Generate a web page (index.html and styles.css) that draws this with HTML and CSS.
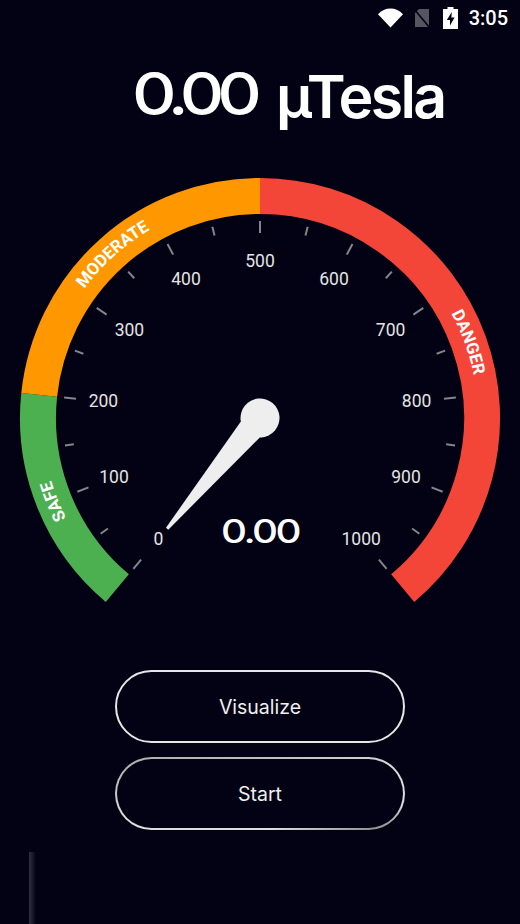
FILE: index.html
```html
<!DOCTYPE html>
<html lang="en">
<head>
    <meta charset="UTF-8">
    <meta name="viewport" content="width=device-width, initial-scale=1.0">
    <title>µTesla meter</title>
    <link rel="stylesheet" href="styles.css">
</head>
<body>
    <div class="page">
        <div class="status-bar">
            <svg class="wifi-icon" width="25" height="20" viewBox="0 0 25 20">
                <path d="M0 6.2C3.4 2.6 7.7 0.6 12.5 0.6S21.6 2.6 25 6.2L12.5 19.6Z" fill="#fff"/>
            </svg>
            <svg class="sim-icon" width="16" height="20" viewBox="0 0 16 20">
                <path d="M5 1H15V19H1V5Z" fill="#55555f"/>
                <path d="M0 1L16 20" stroke="#020214" stroke-width="1.6"/>
            </svg>
            <svg class="battery-icon" width="15" height="22" viewBox="0 0 15 22">
                <path d="M4.5 0H10.5V2H15V22H0V2H4.5Z" fill="#fff"/>
                <path d="M8.8 5L3.8 13H7V18.5L11.6 10.4H8.4Z" fill="#020214"/>
            </svg>
            <span class="clock">3:05</span>
        </div>

        <div class="reading">
            <span class="reading-value">0.00</span>
            <span class="reading-unit">µTesla</span>
        </div>

        <svg class="gauge" width="520" height="440" viewBox="0 170 520 440">
            <path d="M117.3 588.1A222 222 0 0 1 39.2 394.8" class="band band-safe"/>
            <path d="M39.2 394.8A222 222 0 0 1 260 196" class="band band-moderate"/>
            <path d="M260 196A222 222 0 0 1 402.7 588.1" class="band band-danger"/>

            <path id="safe-path" d="M119.9 585A218 218 0 0 1 43.2 395.2" fill="none"/>
            <path id="moderate-path" d="M43.2 395.2A218 218 0 0 1 260 200" fill="none"/>
            <path id="danger-path" d="M260 200A218 218 0 0 1 400.1 585" fill="none"/>
            <text class="band-label"><textPath href="#safe-path" startOffset="50%">SAFE</textPath></text>
            <text class="band-label"><textPath href="#moderate-path" startOffset="50%">MODERATE</textPath></text>
            <text class="band-label"><textPath href="#danger-path" startOffset="50%">DANGER</textPath></text>

            <g transform="translate(260 418)">
                <line class="tick" y1="-197" y2="-185" transform="rotate(-140)"/>
                <line class="tick" y1="-197" y2="-188" transform="rotate(-126)"/>
                <line class="tick" y1="-197" y2="-185" transform="rotate(-112)"/>
                <line class="tick" y1="-197" y2="-188" transform="rotate(-98)"/>
                <line class="tick" y1="-197" y2="-185" transform="rotate(-84)"/>
                <line class="tick" y1="-197" y2="-188" transform="rotate(-70)"/>
                <line class="tick" y1="-197" y2="-185" transform="rotate(-56)"/>
                <line class="tick" y1="-197" y2="-188" transform="rotate(-42)"/>
                <line class="tick" y1="-197" y2="-185" transform="rotate(-28)"/>
                <line class="tick" y1="-197" y2="-188" transform="rotate(-14)"/>
                <line class="tick" y1="-197" y2="-185"/>
                <line class="tick" y1="-197" y2="-188" transform="rotate(14)"/>
                <line class="tick" y1="-197" y2="-185" transform="rotate(28)"/>
                <line class="tick" y1="-197" y2="-188" transform="rotate(42)"/>
                <line class="tick" y1="-197" y2="-185" transform="rotate(56)"/>
                <line class="tick" y1="-197" y2="-188" transform="rotate(70)"/>
                <line class="tick" y1="-197" y2="-185" transform="rotate(84)"/>
                <line class="tick" y1="-197" y2="-188" transform="rotate(98)"/>
                <line class="tick" y1="-197" y2="-185" transform="rotate(112)"/>
                <line class="tick" y1="-197" y2="-188" transform="rotate(126)"/>
                <line class="tick" y1="-197" y2="-185" transform="rotate(140)"/>
            </g>

            <text class="scale" x="158.5" y="545">0</text>
            <text class="scale" x="114" y="483">100</text>
            <text class="scale" x="103.4" y="407">200</text>
            <text class="scale" x="129.4" y="336">300</text>
            <text class="scale" x="186" y="285">400</text>
            <text class="scale" x="260" y="267">500</text>
            <text class="scale" x="334" y="285">600</text>
            <text class="scale" x="390.6" y="336">700</text>
            <text class="scale" x="416.6" y="407">800</text>
            <text class="scale" x="406" y="483">900</text>
            <text class="scale" x="361.2" y="545">1000</text>

            <g class="needle" transform="translate(260 418) rotate(-140)">
                <circle r="19.5"/>
                <path d="M-12.4 -15L-1.5 -144.5H1.5L12.4 -15Z"/>
            </g>

            <text class="gauge-value" x="260" y="543" textLength="78" lengthAdjust="spacingAndGlyphs">0.00</text>
        </svg>

        <div class="actions">
            <button class="action">Visualize</button>
            <button class="action action-faded">Start</button>
        </div>

        <div class="ad-edge"></div>
    </div>
</body>
</html>
```

FILE: styles.css
```css
body {
    margin: 0;
    background-color: #020214;
    font-family: Inter, sans-serif;
}
.page {
    width: 520px;
    height: 924px;
    overflow: hidden;
    display: flex;
    flex-direction: column;
}
.status-bar {
    height: 36px;
    display: flex;
    align-items: center;
    justify-content: flex-end;
    padding-right: 12px;
}
.wifi-icon {
    margin-right: 11px;
}
.sim-icon {
    margin-right: 13px;
}
.battery-icon {
    margin-right: 11px;
}
.clock {
    font-family: Roboto, sans-serif;
    font-weight: 500;
    font-size: 20px;
    color: #fff;
}
.reading {
    height: 134px;
    box-sizing: border-box;
    padding: 22px 0 0 132px;
    display: flex;
    color: #fff;
    font-size: 59px;
    line-height: 72px;
    font-weight: 600;
}
.reading-value {
    width: 144px;
    letter-spacing: -6px;
    font-weight: 500;
    transform: scaleX(1.17);
    transform-origin: left;
}
.reading-unit {
    margin-top: 3px;
    letter-spacing: -2.6px;
}
.gauge {
    display: block;
}
.band {
    fill: none;
    stroke-width: 36;
}
.band-safe {
    stroke: #4caf50;
}
.band-moderate {
    stroke: #ff9800;
}
.band-danger {
    stroke: #f44638;
}
.band-label {
    font-family: Roboto, sans-serif;
    font-weight: 700;
    font-size: 17px;
    fill: #fff;
    text-anchor: middle;
}
.tick {
    stroke: #85858c;
    stroke-width: 2;
}
.scale {
    font-family: Roboto, sans-serif;
    font-size: 17.5px;
    fill: #e4e4e4;
    text-anchor: middle;
}
.needle {
    fill: #eeeeee;
}
.gauge-value {
    font-size: 32px;
    font-weight: 500;
    letter-spacing: -2px;
    fill: #fff;
    text-anchor: middle;
}
.actions {
    margin-top: 60px;
    display: flex;
    flex-direction: column;
    align-items: center;
    gap: 14px;
}
.action {
    width: 290px;
    height: 73px;
    border: 2px solid #e6e6e6;
    border-radius: 37px;
    background: transparent;
    color: #efefef;
    font-family: Inter, sans-serif;
    font-size: 19.5px;
}
.action-faded {
    border-color: transparent;
    background: linear-gradient(#020214, #020214) padding-box,
        linear-gradient(170deg, #aaa 0%, #ddd 50%, #ddd 80%, #777 100%) border-box;
}
.ad-edge {
    margin: 22px 0 0 29px;
    width: 7px;
    height: 72px;
    background: linear-gradient(to right, rgba(255, 255, 255, 0.18), rgba(255, 255, 255, 0));
}
```
